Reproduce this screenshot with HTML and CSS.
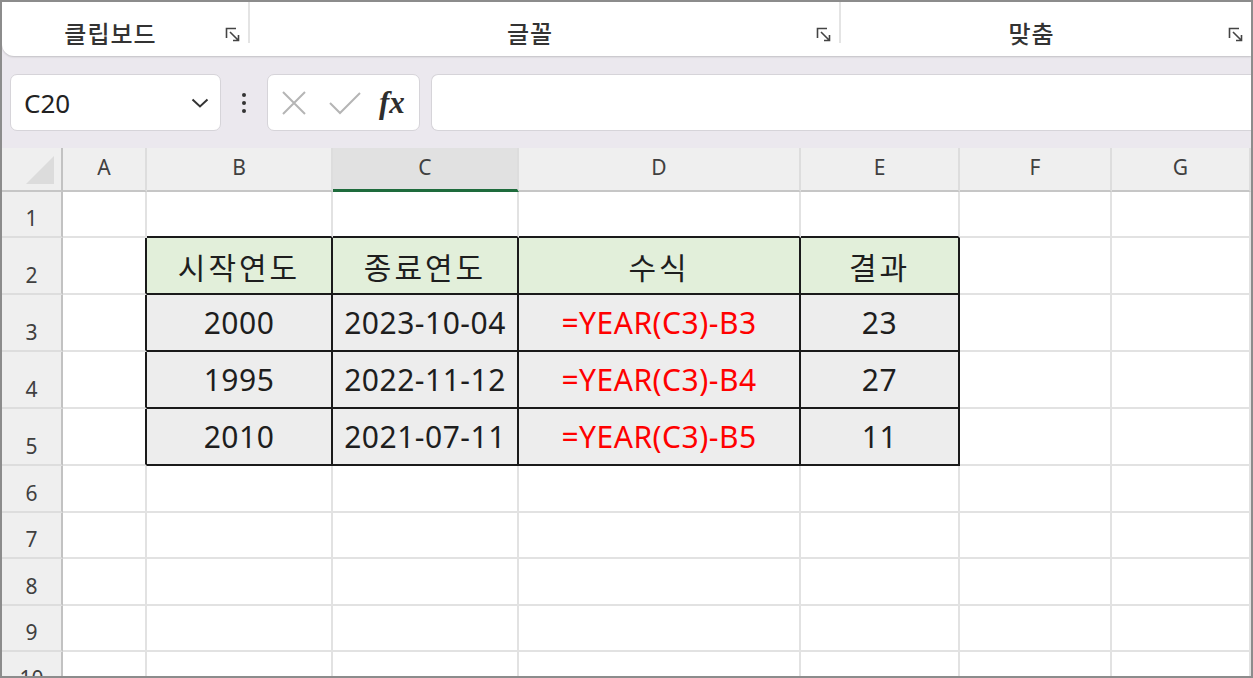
FILE: index.html
```html
<!DOCTYPE html>
<html lang="ko">

<head>
    <meta charset="UTF-8">
    <title>YEAR 함수 예제</title>
    <link rel="stylesheet" href="styles.css">
</head>

<body>
    <div class="window">
        <!-- Ribbon group labels -->
        <div class="ribbon">
            <div class="group g1">
                <span class="group-label">클립보드</span>
                <svg class="launcher" viewBox="0 0 16 16"><path d="M1.5 11 V1.5 H11" /><path d="M5 5 L13.5 13.5 M13.5 8 V13.5 H8" /></svg>
            </div>
            <div class="sep"></div>
            <div class="group g2">
                <span class="group-label">글꼴</span>
                <svg class="launcher" viewBox="0 0 16 16"><path d="M1.5 11 V1.5 H11" /><path d="M5 5 L13.5 13.5 M13.5 8 V13.5 H8" /></svg>
            </div>
            <div class="sep"></div>
            <div class="group g3">
                <span class="group-label">맞춤</span>
                <svg class="launcher" viewBox="0 0 16 16"><path d="M1.5 11 V1.5 H11" /><path d="M5 5 L13.5 13.5 M13.5 8 V13.5 H8" /></svg>
            </div>
        </div>

        <!-- Name box + formula bar -->
        <div class="formula-bar">
            <div class="name-box">
                <span>C20</span>
                <svg class="chevron" viewBox="0 0 18 10"><polyline points="1.5,1.5 9,8.5 16.5,1.5" /></svg>
            </div>
            <div class="more-dots"><i></i><i></i><i></i></div>
            <div class="fx-box">
                <svg class="cancel" viewBox="0 0 26 26"><path d="M2 2 L24 24 M24 2 L2 24" /></svg>
                <svg class="enter" viewBox="0 0 34 26"><polyline points="2,13 12,23 32,3" /></svg>
                <span class="fx">fx</span>
            </div>
            <div class="formula-input"></div>
        </div>

        <div class="sheet" id="sheet">
            <!-- cells are built by the script below -->
        </div>
    </div>

    <script>
        const cols = ["A", "B", "C", "D", "E", "F", "G"];
        const selectedCol = "C";

        // rows 2..5 hold the table (columns B..E)
        const data = {
            2: ["시작연도", "종료연도", "수식", "결과"],
            3: ["2000", "2023-10-04", "=YEAR(C3)-B3", "23"],
            4: ["1995", "2022-11-12", "=YEAR(C3)-B4", "27"],
            5: ["2010", "2021-07-11", "=YEAR(C3)-B5", "11"]
        };

        const sheet = document.getElementById("sheet");
        let html = '<div class="corner"><span></span></div>';

        cols.forEach(c => {
            const sel = c === selectedCol ? " selected" : "";
            html += `<div class="col-head${sel}">${c}</div>`;
        });

        for (let r = 1; r <= 10; r++) {
            html += `<div class="row-head">${r}</div>`;
            cols.forEach((c, i) => {
                let cls = "cell";
                let text = "";
                const inTable = i >= 1 && i <= 4;
                if (data[r] && inTable) {
                    cls += r === 2 ? " tbl head" : " tbl data";
                    if (r > 2 && i === 3) cls += " formula";
                    text = data[r][i - 1];
                } else if (r === 1 && inTable) {
                    cls += " edge-b";
                } else if (i === 0 && data[r]) {
                    cls += " edge-r";
                }
                html += `<div class="${cls}">${text}</div>`;
            });
        }

        sheet.innerHTML = html;
    </script>
</body>

</html>
```

FILE: styles.css
```css
* {
    box-sizing: border-box;
    margin: 0;
    padding: 0;
}

body {
    font-family: "Noto Sans", "Noto Sans CJK KR", sans-serif;
    background-color: #ffffff;
    color: #222;
}

.window {
    width: 1253px;
    height: 678px;
    border: 2px solid #8c8c8c;
    background-color: #ebe8ee;
    overflow: hidden;
    display: flex;
    flex-direction: column;
}

/* ---------- ribbon ---------- */

.ribbon {
    display: flex;
    height: 54px;
    flex-shrink: 0;
    background-color: #ffffff;
    border-bottom-left-radius: 12px;
    box-shadow: 0 1px 2px rgba(0, 0, 0, 0.18);
}

.group {
    display: flex;
    align-items: center;
    padding-top: 6px;
}

.g1 {
    width: 246px;
}

.g2 {
    width: 589px;
}

.g3 {
    flex: 1;
}

.sep {
    width: 2px;
    height: 41px;
    background-color: #e4e4e4;
}

.group-label {
    flex: 1;
    text-align: center;
    font-family: "Noto Sans CJK KR", sans-serif;
    font-size: 24px;
    font-weight: 500;
    letter-spacing: 1px;
    color: #333;
}

.launcher {
    width: 16px;
    height: 16px;
    margin: 6px 7px 0 6px;
    fill: none;
    stroke: #444;
    stroke-width: 1.6;
}

/* ---------- formula bar ---------- */

.formula-bar {
    display: flex;
    height: 92px;
    flex-shrink: 0;
    padding: 18px 0 17px 8px;
}

.name-box {
    width: 211px;
    display: flex;
    align-items: center;
    justify-content: space-between;
    padding: 0 11px 0 13px;
    background-color: #ffffff;
    border: 1px solid #d6d4d9;
    border-radius: 7px;
    font-size: 26px;
    color: #222;
}

.chevron {
    width: 18px;
    height: 10px;
    fill: none;
    stroke: #333;
    stroke-width: 2;
}

.more-dots {
    width: 46px;
    display: flex;
    flex-direction: column;
    align-items: center;
    justify-content: center;
    gap: 4px;
}

.more-dots i {
    width: 4px;
    height: 4px;
    border-radius: 50%;
    background-color: #333;
}

.fx-box {
    width: 153px;
    display: flex;
    align-items: center;
    padding-left: 13px;
    background-color: #ffffff;
    border: 1px solid #d6d4d9;
    border-radius: 7px;
}

.cancel {
    width: 26px;
    height: 26px;
    fill: none;
    stroke: #b5b5b5;
    stroke-width: 2;
}

.enter {
    width: 34px;
    height: 26px;
    margin-left: 21px;
    fill: none;
    stroke: #b5b5b5;
    stroke-width: 2;
}

.fx {
    margin-left: 17px;
    font-family: "Liberation Serif", serif;
    font-style: italic;
    font-weight: bold;
    font-size: 31px;
    color: #2e2e2e;
}

.formula-input {
    flex: 1;
    margin-left: 11px;
    background-color: #ffffff;
    border: 1px solid #d6d4d9;
    border-right: none;
    border-radius: 7px 0 0 7px;
}

/* ---------- sheet grid ---------- */

.sheet {
    flex: 1;
    display: grid;
    grid-template-columns: 61px 84px 186px 186px 282px 159px 152px 1fr;
    grid-template-rows: 44px 46px 57px 57px 57px 57px 47px 46px 47px 46px 46px;
    background-color: #ffffff;
    overflow: hidden;
}

.corner {
    display: flex;
    align-items: flex-end;
    justify-content: flex-end;
    padding: 0 7px 6px 0;
    background-color: #efefef;
    border-right: 2px solid #c2c2c2;
    border-bottom: 2px solid #c6c6c6;
}

.corner span {
    width: 28px;
    height: 28px;
    background-color: #dcdcdc;
    clip-path: polygon(100% 0, 100% 100%, 0 100%);
}

.col-head {
    display: flex;
    align-items: center;
    justify-content: center;
    padding-bottom: 4px;
    background-color: #efefef;
    border-right: 2px solid #dddddd;
    border-bottom: 2px solid #c6c6c6;
    font-size: 21px;
    color: #404040;
}

.col-head.selected {
    background-color: #e1e1e1;
    border-bottom: 3px solid #1e6b3c;
}

.row-head {
    display: flex;
    align-items: flex-end;
    justify-content: center;
    padding-bottom: 5px;
    background-color: #efefef;
    border-right: 2px solid #c2c2c2;
    border-bottom: 2px solid #dddddd;
    font-size: 21px;
    line-height: 1.2;
    color: #404040;
}

.cell {
    display: flex;
    align-items: center;
    justify-content: center;
    border-right: 2px solid #e2e2e2;
    border-bottom: 2px solid #e2e2e2;
    font-size: 30px;
    letter-spacing: 0.5px;
    color: #1e1e1e;
}

.cell.edge-b {
    border-bottom-color: #1a1a1a;
}

.cell.edge-r {
    border-right-color: #1a1a1a;
}

.tbl {
    border-right-color: #1a1a1a;
    border-bottom-color: #1a1a1a;
}

.tbl.head {
    background-color: #e2efda;
    letter-spacing: 3px;
}

.tbl.data {
    background-color: #ededed;
}

.tbl.formula {
    color: #ff0000;
}
```
